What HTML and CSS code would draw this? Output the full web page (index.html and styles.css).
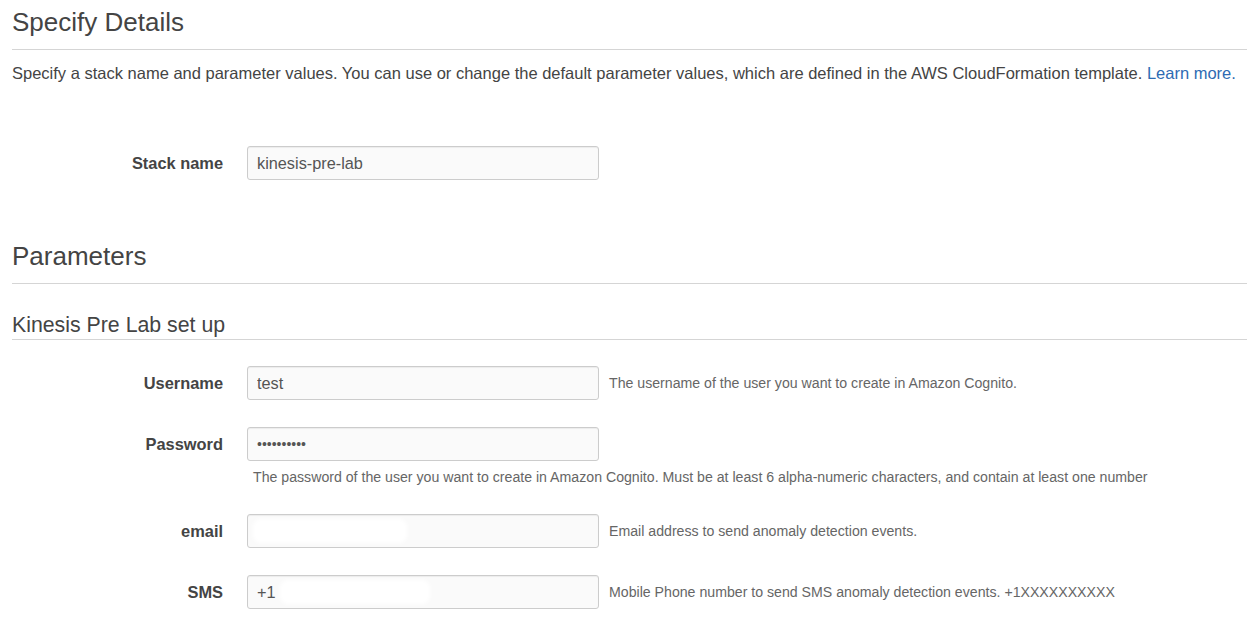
FILE: index.html
```html
<!DOCTYPE html>
<html>
<head>
<meta charset="utf-8">
<link rel="stylesheet" href="styles.css">
</head>
<body>
<div class="page">
  <h1 class="title">Specify Details</h1>
  <hr class="rule">
  <p class="intro">Specify a stack name and parameter values. You can use or change the default parameter values, which are defined in the AWS CloudFormation template. <a class="link" href="#">Learn more.</a></p>

  <div class="field stack-row">
    <label class="label">Stack name</label>
    <div class="control"><input class="input" type="text" value="kinesis-pre-lab"></div>
  </div>

  <h1 class="title params">Parameters</h1>
  <hr class="rule">
  <h2 class="subtitle">Kinesis Pre Lab set up</h2>
  <hr class="rule">

  <div class="field first">
    <label class="label">Username</label>
    <div class="control"><input class="input" type="text" value="test"></div>
    <div class="help">The username of the user you want to create in Amazon Cognito.</div>
  </div>

  <div class="field">
    <label class="label">Password</label>
    <div class="control"><input class="input pw" type="password" value="secret1234"></div>
    <div class="help below">The password of the user you want to create in Amazon Cognito. Must be at least 6 alpha-numeric characters, and contain at least one number</div>
  </div>

  <div class="field after-help">
    <label class="label">email</label>
    <div class="control"><input class="input" type="text" value=""><span class="redact r-email"></span></div>
    <div class="help">Email address to send anomaly detection events.</div>
  </div>

  <div class="field">
    <label class="label">SMS</label>
    <div class="control"><input class="input" type="text" value="+1"><span class="redact r-sms"></span></div>
    <div class="help">Mobile Phone number to send SMS anomaly detection events. +1XXXXXXXXXX</div>
  </div>
</div>
</body>
</html>
```

FILE: styles.css
```css
* { box-sizing: border-box; }
html, body { margin: 0; padding: 0; background: #fff; }
body {
  font-family: "Liberation Sans", Arial, sans-serif;
  color: #444;
}
.page {
  padding: 8px 0 0 12px;
}
.title {
  margin: 0 0 13px 0;
  font-size: 26px;
  line-height: 28px;
  font-weight: normal;
  color: #444;
}
.title.params { margin-top: 62px; }
.rule {
  margin: 0;
  border: 0;
  border-top: 1px solid #d5d5d5;
  height: 0;
}
.intro {
  margin: 13px 0 0 0;
  font-size: 16.5px;
  line-height: 20px;
  color: #444;
  white-space: nowrap;
}
.link { color: #2e6bb3; text-decoration: none; }
.subtitle {
  margin: 29px 0 2px 0;
  font-size: 21.3px;
  line-height: 24px;
  font-weight: normal;
  color: #444;
}
.field {
  display: grid;
  grid-template-columns: 211px 352px auto;
  column-gap: 24px;
  align-items: center;
  margin-top: 27px;
}
.field .help { margin-left: -14px; }
.stack-row { margin-top: 63px; }
.field.first { margin-top: 26px; }
.field.after-help { margin-top: 28px; }
.label {
  text-align: right;
  font-weight: bold;
  font-size: 16.4px;
  color: #444;
}
.control { position: relative; height: 34px; }
.input {
  width: 352px;
  height: 34px;
  border: 1px solid #ccc;
  border-radius: 3px;
  background: #fafafa;
  box-shadow: inset 0 1px 1px rgba(0,0,0,0.06);
  padding: 0 9px;
  font-family: "Liberation Sans", Arial, sans-serif;
  font-size: 16.3px;
  color: #555;
  outline: none;
}
.input.pw { font-size: 14px; }
.help {
  font-size: 14.15px;
  color: #666;
  white-space: nowrap;
}
.help.below {
  grid-column: 2 / 4;
  margin: 8px 0 0 6px;
  line-height: 17px;
}
.redact {
  position: absolute;
  top: 5px;
  height: 24px;
  background: #fff;
  border-radius: 8px;
  filter: blur(2px);
}
.r-email { left: 6px; width: 154px; }
.r-sms { left: 33px; width: 150px; }
```
